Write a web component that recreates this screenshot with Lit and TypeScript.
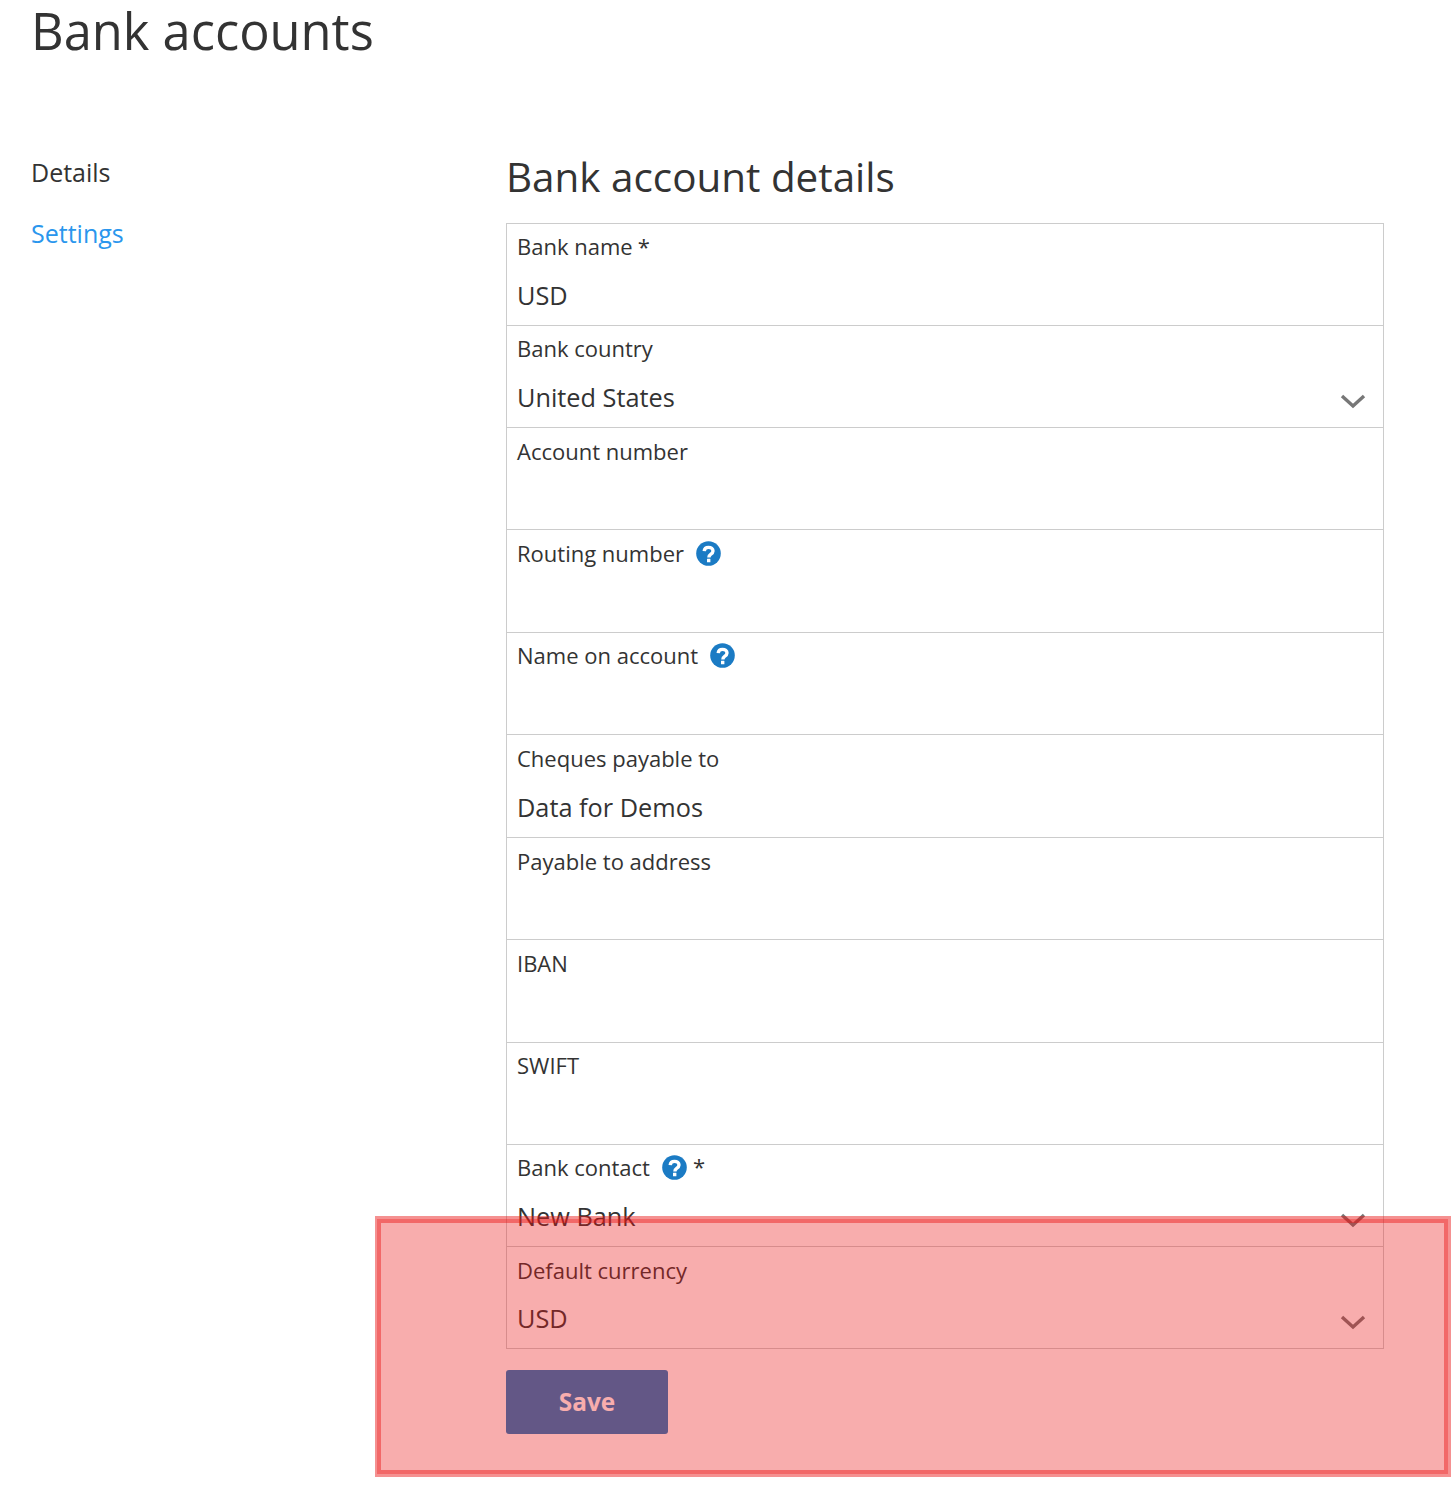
import { LitElement, html, css, nothing } from 'lit';
import { customElement } from 'lit/decorators.js';
import { classMap } from 'lit/directives/class-map.js';

interface Field {
  label: string;
  value?: string;
  help?: boolean;
  required?: boolean;
  select?: boolean;
  tall?: boolean;
  tight?: boolean;
}

// row heights were fractional on the original page, tall/tight keep the same pixel rounding
const FIELDS: Field[] = [
  { label: 'Bank name', value: 'USD', required: true, tight: true },
  { label: 'Bank country', value: 'United States', select: true, tight: true },
  { label: 'Account number' },
  { label: 'Routing number', help: true, tall: true },
  { label: 'Name on account', help: true, tight: true },
  { label: 'Cheques payable to', value: 'Data for Demos', tall: true },
  { label: 'Payable to address' },
  { label: 'IBAN', tall: true },
  { label: 'SWIFT', tight: true },
  { label: 'Bank contact', value: 'New Bank', help: true, required: true, select: true, tight: true },
  { label: 'Default currency', value: 'USD', select: true },
];

@customElement('app-root')
export class AppRoot extends LitElement {
  static styles = css`
    :host {
      display: block;
      position: relative;
      height: 1485px;
      background: #fff;
      overflow: hidden;
      font-family: 'Open Sans', sans-serif;
      color: #333;
    }
    .page-title {
      margin: 0;
      padding-left: 31px;
      height: 154px;
      font-size: 50.6px;
      line-height: 62px;
      font-weight: 400;
    }
    .layout {
      display: flex;
      padding-left: 31px;
    }
    .side {
      width: 475px;
      flex: none;
      font-size: 25px;
    }
    .side a {
      display: block;
      height: 61px;
      line-height: 36px;
      color: #333;
      text-decoration: none;
    }
    .side a.link {
      color: #2a96ed;
    }
    .main {
      width: 878px;
      flex: none;
      padding-top: 1px;
    }
    h2 {
      margin: 0;
      height: 68px;
      font-size: 40.4px;
      line-height: 44px;
      font-weight: 400;
    }
    .fields {
      border: 1px solid #ccc;
      border-bottom: none;
    }
    .field {
      box-sizing: border-box;
      height: 102px;
      padding: 7px 10px 0;
      border-bottom: 1px solid #ccc;
    }
    .field.tall {
      height: 103px;
    }
    .field.tight {
      padding-top: 6px;
    }
    .label {
      display: flex;
      align-items: center;
      height: 32px;
      font-size: 22px;
      line-height: 32px;
    }
    .help {
      width: 25px;
      height: 25px;
      margin-left: 12px;
      flex: none;
    }
    .star {
      margin-left: 5px;
    }
    .help + .star {
      margin-left: 6px;
      margin-top: -2px;
    }
    .value {
      display: flex;
      justify-content: space-between;
      align-items: center;
      margin-top: 14px;
      height: 36px;
      font-size: 25.3px;
      line-height: 36px;
    }
    .tall .value {
      margin-top: 15px;
    }
    .tight .value {
      margin-top: 15px;
    }
    .chevron {
      width: 26px;
      height: 16px;
      margin: 7px 7px 0 0;
    }
    .save {
      display: block;
      margin-top: 21px;
      padding: 0 0 2px;
      width: 162px;
      height: 64px;
      border: none;
      border-radius: 3px;
      background: #1b7bc4;
      color: #fff;
      font-family: inherit;
      font-size: 24.4px;
      font-weight: 700;
    }
    .highlight {
      position: absolute;
      left: 375px;
      top: 1216px;
      width: 1076px;
      height: 261px;
      box-sizing: border-box;
      background: rgba(235, 20, 20, 0.35);
      border: 3px solid rgba(235, 20, 20, 0.18);
      border-left-width: 2px;
      box-shadow: inset 0 0 0 4px rgba(235, 20, 20, 0.45);
    }
  `;

  renderField(f: Field) {
    return html`
      <div class=${classMap({ field: true, tall: !!f.tall, tight: !!f.tight })}>
        <div class="label">
          <span>${f.label}</span>
          ${f.help
            ? html`<svg class="help" viewBox="0 0 25 25">
                <circle cx="12.5" cy="12.5" r="12.3" fill="#1b7bc4"></circle>
                <path d="M8.2 10.2C8.4 7.6 10.2 6.4 12.5 6.4c2.6 0 4.5 1.4 4.5 3.7 0 1.9-1.4 2.7-2.6 3.5-1 .7-1.5 1.3-1.5 2.9" fill="none" stroke="#fff" stroke-width="3.4"></path>
                <rect x="11" y="17.8" width="3.4" height="3.4" rx=".3" fill="#fff"></rect>
              </svg>`
            : nothing}
          ${f.required ? html`<span class="star">*</span>` : nothing}
        </div>
        <div class="value">
          <span>${f.value ?? ''}</span>
          ${f.select
            ? html`<svg class="chevron" viewBox="0 0 26 16">
                <path d="M2 3l11 10L24 3" fill="none" stroke="#777" stroke-width="3.4"></path>
              </svg>`
            : nothing}
        </div>
      </div>
    `;
  }

  render() {
    return html`
      <h1 class="page-title">Bank accounts</h1>
      <div class="layout">
        <nav class="side">
          <a href="#">Details</a>
          <a href="#" class="link">Settings</a>
        </nav>
        <section class="main">
          <h2>Bank account details</h2>
          <div class="fields">${FIELDS.map((f) => this.renderField(f))}</div>
          <button class="save">Save</button>
        </section>
      </div>
      <div class="highlight"></div>
    `;
  }
}
